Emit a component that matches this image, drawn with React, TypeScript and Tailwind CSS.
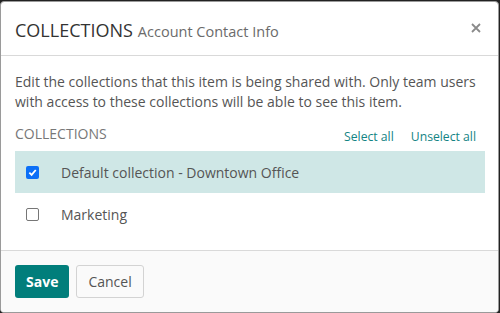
import React from "react";

export default function App() {
  return (
    <div className="w-[500px] h-[313px] bg-[#222222] pt-px pr-px overflow-hidden" style={{ fontFamily: '"Open Sans", "Noto Sans", sans-serif' }}>
      <div className="w-[499px] h-[312px] bg-white border border-[#9a9a9a] rounded-[4px] flex flex-col overflow-hidden">
        <div className="h-[54px] flex items-center justify-between pl-[14px] pr-[15px] border-b border-[#d9d9d9] shrink-0">
          <div className="flex items-baseline gap-[5px] pt-[4px]">
            <span className="text-[18px] text-[#333333] leading-none">COLLECTIONS</span>
            <span className="text-[14.5px] text-[#6b6b6b] leading-none">Account Contact Info</span>
          </div>
          <svg width="10" height="10" viewBox="0 0 10 10" className="mt-[-2px] mr-[2px]">
            <path d="M1 1 L9 9 M9 1 L1 9" stroke="#8a8a8a" strokeWidth="1.8" />
          </svg>
        </div>
        <div className="flex-1 px-[14px] pt-[16px]">
          <p className="text-[14px] leading-[20px] text-[#555555] w-[470px]">
            Edit the collections that this item is being shared with. Only team users with access to these collections will be able to see this item.
          </p>
          <div className="flex items-end justify-between mt-[12px] pr-[8px]">
            <span className="text-[14px] text-[#777777] leading-[20px]">COLLECTIONS</span>
            <div className="flex gap-[17px] text-[12.2px] text-[#138484] leading-[20px] mb-[-3px]">
              <span>Select all</span>
              <span>Unselect all</span>
            </div>
          </div>
          <div className="mt-[7px] w-[470px]">
            <div className="h-[42px] bg-[#cfe7e6] flex items-center pl-[11px]">
              <span className="w-[13px] h-[13px] rounded-[2px] bg-[#0b6ff7] flex items-center justify-center">
                <svg width="9" height="9" viewBox="0 0 10 10">
                  <path d="M1.5 5.2 L4 7.6 L8.6 2.2" stroke="white" strokeWidth="2" fill="none" />
                </svg>
              </span>
              <span className="ml-[22px] text-[14px] text-[#555555]">Default collection - Downtown Office</span>
            </div>
            <div className="h-[42px] flex items-center pl-[11px]">
              <span className="w-[13px] h-[13px] rounded-[2px] border border-[#767676] bg-white" />
              <span className="ml-[22px] text-[14px] text-[#555555]">Marketing</span>
            </div>
          </div>
        </div>
        <div className="h-[62px] shrink-0 border-t border-[#d9d9d9] bg-[#fafafa] flex items-center pl-[14px] gap-[7px] pb-[1px]">
          <button className="h-[33px] px-[11px] rounded-[3px] bg-[#017e7b] text-white font-bold text-[14px]">Save</button>
          <button className="h-[33px] px-[11px] rounded-[3px] border border-[#d3d3d3] bg-[#fafafa] text-[#555555] text-[14px]">Cancel</button>
        </div>
      </div>
    </div>
  );
}
